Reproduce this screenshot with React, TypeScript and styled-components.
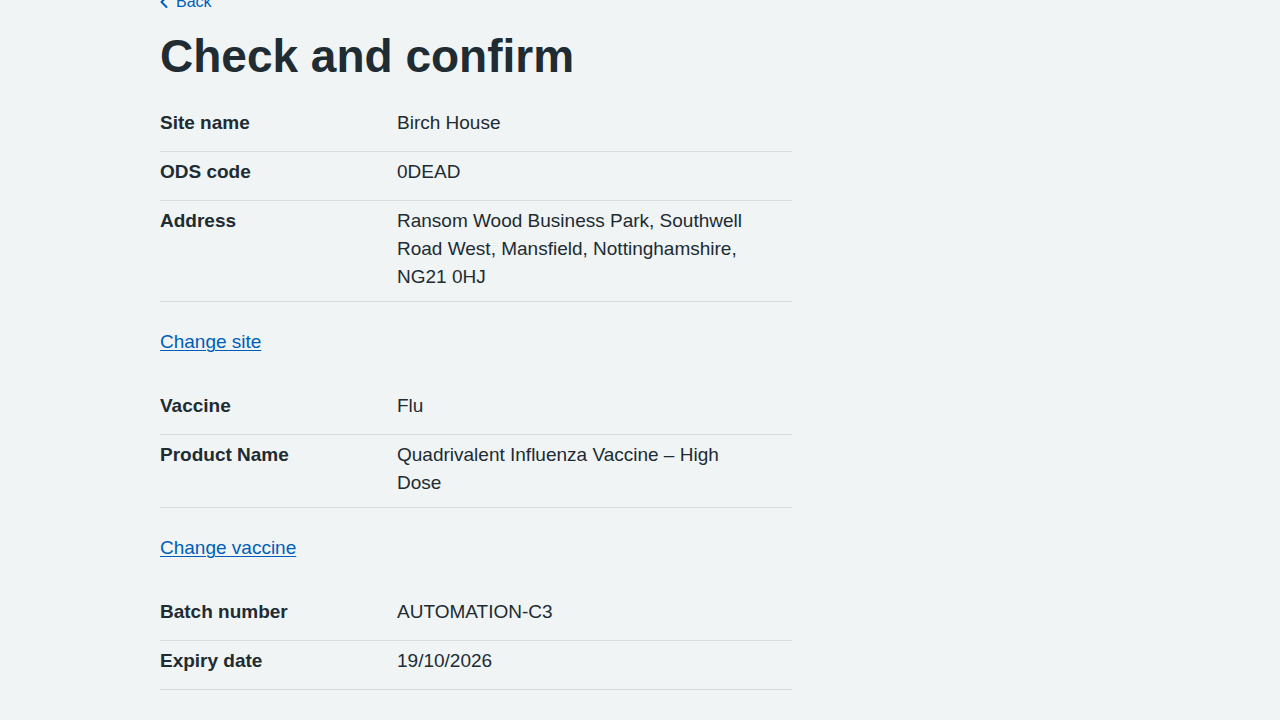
import React from "react";
import styled, { createGlobalStyle } from "styled-components";

const GlobalStyle = createGlobalStyle`
  html, body {
    margin: 0;
    padding: 0;
    background: #f0f4f5;
  }
  body {
    font-family: "Liberation Sans", Arial, sans-serif;
    color: #212b32;
    -webkit-font-smoothing: antialiased;
  }
  * { box-sizing: border-box; }
`;

const Main = styled.main`
  width: 632px;
  margin: -10px 0 0 160px;
  display: flex;
  flex-direction: column;
`;

const BackLink = styled.a`
  position: relative;
  align-self: flex-start;
  display: inline-flex;
  align-items: center;
  padding-left: 16px;
  font-size: 16px;
  line-height: 24px;
  color: #005eb8;
  text-decoration: none;
  margin-bottom: 14px;

  svg {
    position: absolute;
    left: -8px;
    top: 0;
    width: 24px;
    height: 24px;
    fill: #005eb8;
  }
`;

const Heading = styled.h1`
  margin: 0 0 19px;
  font-size: 46px;
  line-height: 56px;
  font-weight: 700;
  color: #212b32;
`;

const SummaryList = styled.dl`
  margin: 0 0 25px;
  display: flex;
  flex-direction: column;
`;

const Row = styled.div`
  display: grid;
  grid-template-columns: 237px 1fr;
  border-bottom: 1px solid #d8dde0;
`;

const Key = styled.dt`
  margin: 0;
  padding: 6px 24px 14px 0;
  font-size: 19px;
  line-height: 28px;
  font-weight: 700;
`;

const Value = styled.dd`
  margin: 0;
  padding: 6px 24px 10px 0;
  font-size: 19px;
  line-height: 28px;
`;

const ActionPara = styled.p`
  margin: 0 0 30px;
  padding-top: 1px;
  font-size: 19px;
  line-height: 28px;
`;

const Link = styled.a`
  color: #005eb8;
  text-decoration: underline;
  text-underline-offset: 2px;
  text-decoration-thickness: 1px;
`;

type Item = { key: string; value: string };

const Summary = ({ items }: { items: Item[] }) => (
  <SummaryList>
    {items.map((it) => (
      <Row key={it.key}>
        <Key>{it.key}</Key>
        <Value>{it.value}</Value>
      </Row>
    ))}
  </SummaryList>
);

export default function App() {
  return (
    <>
      <GlobalStyle />
      <Main>
        <BackLink href="#">
          <svg viewBox="0 0 24 24" aria-hidden="true">
            <path d="M8.5 12c0-.3.1-.5.3-.7l5-5c.4-.4 1-.4 1.4 0s.4 1 0 1.4L10.9 12l4.3 4.3c.4.4.4 1 0 1.4s-1 .4-1.4 0l-5-5c-.2-.2-.3-.4-.3-.7z" />
          </svg>
          Back
        </BackLink>
        <Heading>Check and confirm</Heading>
        <Summary
          items={[
            { key: "Site name", value: "Birch House" },
            { key: "ODS code", value: "0DEAD" },
            {
              key: "Address",
              value:
                "Ransom Wood Business Park, Southwell Road West, Mansfield, Nottinghamshire, NG21 0HJ",
            },
          ]}
        />
        <ActionPara>
          <Link href="#">Change site</Link>
        </ActionPara>
        <Summary
          items={[
            { key: "Vaccine", value: "Flu" },
            { key: "Product Name", value: "Quadrivalent Influenza Vaccine – High Dose" },
          ]}
        />
        <ActionPara>
          <Link href="#">Change vaccine</Link>
        </ActionPara>
        <Summary
          items={[
            { key: "Batch number", value: "AUTOMATION-C3" },
            { key: "Expiry date", value: "19/10/2026" },
          ]}
        />
      </Main>
    </>
  );
}
